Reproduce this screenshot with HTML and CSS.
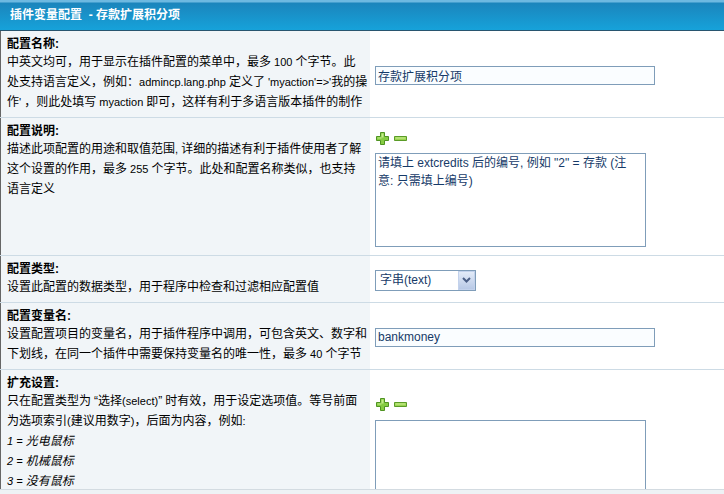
FILE: index.html
```html
<!DOCTYPE html>
<html lang="zh-CN">
<head>
  <meta charset="UTF-8">
  <title>插件变量配置</title>
  <link rel="stylesheet" href="styles.css">
</head>
<body>

  <div class="frame">
    <div class="header">插件变量配置 &nbsp;- 存款扩展积分项</div>

    <div class="row">
      <div class="label">
        <b>配置名称:</b>
        <p class="tip">中英文均可，用于显示在插件配置的菜单中，最多<span class="en"> 100 </span>个字节。此<br>
          处支持语言定义，例如：<span class="en">admincp.lang.php </span>定义了<span class="en"> 'myaction'=&gt;'</span>我的操<br>
          作<span class="en">' </span>，则此处填写<span class="en"> myaction </span>即可，这样有利于多语言版本插件的制作</p>
      </div>
      <div class="field">
        <input type="text" class="txt" value="存款扩展积分项">
      </div>
    </div>

    <div class="row">
      <div class="label">
        <b>配置说明:</b>
        <p class="tip">描述此项配置的用途和取值范围<span class="en">, </span>详细的描述有利于插件使用者了解<br>
          这个设置的作用，最多<span class="en"> 255 </span>个字节。此处和配置名称类似，也支持<br>
          语言定义</p>
      </div>
      <div class="field">
        <div class="tools">
          <svg class="plus" width="13" height="13" viewBox="0 0 13 13"><path d="M4.5 .5h4v4h4v4h-4v4h-4v-4h-4v-4h4z" fill="#86cc43" stroke="#4f9322"/><path d="M5.5 1.5h2v4h-2zM1.5 5.5h4v1h-4z" fill="#c4ec8c"/></svg>
          <svg class="minus" width="13" height="13" viewBox="0 0 13 13"><path d="M.5 4.5h12v4H.5z" fill="#9bd352" stroke="#5a9b27"/><path d="M1.5 5.5h10v1h-10z" fill="#cbee93"/></svg>
        </div>
        <textarea class="area">请填上 extcredits 后的编号, 例如 "2" = 存款 (注意: 只需填上编号)</textarea>
      </div>
    </div>

    <div class="row">
      <div class="label">
        <b>配置类型:</b>
        <p class="tip">设置此配置的数据类型，用于程序中检查和过滤相应配置值</p>
      </div>
      <div class="field">
        <span class="select">
          <select>
            <option>字串(text)</option>
            <option>数字(number)</option>
            <option>文本(textarea)</option>
            <option>选择(select)</option>
          </select>
          <span class="arrow"><svg width="9" height="6" viewBox="0 0 9 6"><path d="M1 1l3.5 3.5L8 1" fill="none" stroke="#4b5f86" stroke-width="2"/></svg></span>
        </span>
      </div>
    </div>

    <div class="row">
      <div class="label">
        <b>配置变量名:</b>
        <p class="tip">设置配置项目的变量名，用于插件程序中调用，可包含英文、数字和<br>
          下划线，在同一个插件中需要保持变量名的唯一性，最多<span class="en"> 40 </span>个字节</p>
      </div>
      <div class="field">
        <input type="text" class="txt" value="bankmoney">
      </div>
    </div>

    <div class="row">
      <div class="label">
        <b>扩充设置:</b>
        <p class="tip">只在配置类型为<span class="en"> </span>“选择<span class="en">(select)</span>”<span class="en"> </span>时有效，用于设定选项值。等号前面<br>
          为选项索引<span class="en">(</span>建议用数字<span class="en">)</span>，后面为内容，例如<span class="en">:</span><br>
          <i><span class="en">1 = </span>光电鼠标<br><span class="en">2 = </span>机械鼠标<br><span class="en">3 = </span>没有鼠标</i><br><br>
          注意<span class="en">: </span>选项确定后请勿随意修改</p>
      </div>
      <div class="field">
        <div class="tools">
          <svg class="plus" width="13" height="13" viewBox="0 0 13 13"><path d="M4.5 .5h4v4h4v4h-4v4h-4v-4h-4v-4h4z" fill="#86cc43" stroke="#4f9322"/><path d="M5.5 1.5h2v4h-2zM1.5 5.5h4v1h-4z" fill="#c4ec8c"/></svg>
          <svg class="minus" width="13" height="13" viewBox="0 0 13 13"><path d="M.5 4.5h12v4H.5z" fill="#9bd352" stroke="#5a9b27"/><path d="M1.5 5.5h10v1h-10z" fill="#cbee93"/></svg>
        </div>
        <textarea class="area"></textarea>
      </div>
    </div>
  </div>

</body>
</html>
```

FILE: styles.css
```css
body {
  margin: 0;
  background-color: #eef2f5;
  font: 12px "Liberation Sans", "Noto Sans CJK SC", sans-serif;
  color: #000;
}

.frame {
  height: 489px;
  overflow: hidden;
  background-color: #fff;
  border-bottom: 1px solid #d3dbe1;
}

.header {
  height: 30px;
  line-height: 30px;
  padding-left: 10px;
  color: #fff;
  font-weight: bold;
  background: linear-gradient(#6db9e1 0, #6db9e1 2px, #1b85bc 3px, #16a2da 100%);
  border-bottom: 1px solid #28556f;
}

.row {
  display: flex;
  border-bottom: 1px solid #cddbe5;
}

.label {
  flex: none;
  width: 358px;
  padding: 5px 5px 5px 6px;
  background-color: #f1f5f8;
  border-left: 1px solid #666;
  overflow: hidden;
}

.label b {
  display: block;
  line-height: 16px;
}

.tip {
  margin: 0;
  line-height: 20px;
  white-space: nowrap;
}

.tip .en {
  font-size: 11px;
}

.field {
  flex: 1;
  padding: 10px 5px 8px;
  display: flex;
  flex-direction: column;
  justify-content: center;
  align-items: flex-start;
  background-color: #fff;
}

.txt {
  box-sizing: border-box;
  width: 280px;
  height: 19px;
  margin: 0;
  padding: 0 2px;
  border: 1px solid #7f9db9;
  background-color: #fafdff;
  font: 12px "Liberation Sans", "Noto Sans CJK SC", sans-serif;
  color: #163a68;
  outline: none;
}

.tools {
  display: flex;
  align-items: center;
  gap: 5px;
  height: 20px;
  margin: 0 0 5px 1px;
}

.area {
  box-sizing: border-box;
  width: 271px;
  height: 94px;
  margin: 0;
  padding: 0 13px 0 2px;
  border: 1px solid #7f9db9;
  font: 12px/18px "Liberation Sans", "Noto Sans CJK SC", sans-serif;
  color: #163a68;
  resize: none;
  outline: none;
}

.select {
  position: relative;
  display: inline-block;
}

.select select {
  appearance: none;
  -webkit-appearance: none;
  box-sizing: border-box;
  width: 101px;
  height: 21px;
  margin: 0;
  padding: 0 0 0 4px;
  border: 1px solid #7f9db9;
  border-radius: 0;
  background-color: #fff;
  font: 12px "Liberation Sans", "Noto Sans CJK SC", sans-serif;
  color: #163a68;
}

.arrow {
  position: absolute;
  top: 1px;
  right: 1px;
  width: 15px;
  height: 17px;
  display: flex;
  justify-content: center;
  align-items: center;
  background: linear-gradient(#e3ebf8, #b8c9e6);
  border: 1px solid #c3d2ec;
  pointer-events: none;
}
```
